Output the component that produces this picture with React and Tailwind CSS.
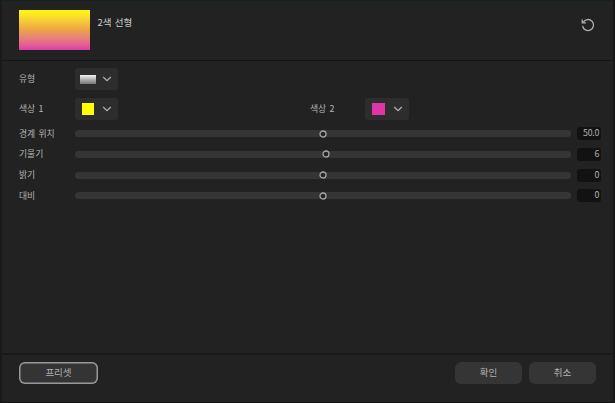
import React from 'react';

const sliders = [
  { label: '경계 위치', value: '50.0', position: 50 },
  { label: '기울기', value: '6', position: 50.7 },
  { label: '밝기', value: '0', position: 50 },
  { label: '대비', value: '0', position: 50 },
];

function Chevron() {
  return (
    <svg className="ml-auto mr-[6px]" width="10" height="6" viewBox="0 0 10 6" fill="none" stroke="#b0b0b0" strokeWidth="1.3">
      <path d="M1.2 1 5 4.7 8.8 1" />
    </svg>
  );
}

function Dropdown({ children, className = 'w-[43px]' }) {
  return (
    <button className={`flex h-[22px] shrink-0 items-center rounded-[3px] bg-[#2d2d2d] ${className}`}>
      {children}
      <Chevron />
    </button>
  );
}

function Label({ children, className = '' }) {
  return <span className={`shrink-0 whitespace-nowrap pb-[0.5px] text-[8.8px] leading-[12px] text-[#b4b4b4] [word-spacing:1.3px] ${className}`}>{children}</span>;
}

function SliderRow({ label, value, position }) {
  return (
    <div className="flex h-[20.67px] items-center">
      <Label className="w-[56px]">{label}</Label>
      <div className="relative h-[7px] w-[496px] rounded-full bg-[#353535]">
        <svg
          className="absolute top-1/2 h-[9px] w-[9px] -translate-x-1/2 -translate-y-1/2"
          style={{ left: `${position}%` }}
          viewBox="0 0 9 9"
        >
          <circle cx="4.5" cy="4.5" r="3" fill="#242424" stroke="#a8a8a8" strokeWidth="1.3" />
        </svg>
      </div>
      <span className="ml-[6px] h-[13px] w-[24px] rounded-[3px] bg-[#121212] pr-[2px] text-right text-[8.8px] leading-[12.5px] tracking-[-0.3px] text-[#b4b4b4]">
        {value}
      </span>
    </div>
  );
}

export default function App() {
  return (
    <div className="flex h-[403px] w-[615px] flex-col overflow-hidden border-x-2 border-b border-t border-x-[#191919] border-b-[#111111] border-t-[#12231e] bg-[#222222] font-['Noto_Sans_CJK_KR',sans-serif]">
      <header className="flex h-[60px] shrink-0 border-b border-[#151515] pl-[17px] pr-[18px] pt-[9px]">
        <div className="h-[40px] w-[71px] bg-linear-to-b from-[#fffb00] via-[#eba344] to-[#df3aa6]" />
        <h1 className="ml-[7.5px] mt-[5px] text-[9.5px] leading-[14px] text-[#cccccc] [word-spacing:1px]">2색 선형</h1>
        <button className="ml-auto mt-[7px] h-[16px] w-[14px]">
          <svg width="14" height="16" viewBox="0 0 14 16" fill="none" stroke="#b0b0b0" strokeWidth="1.3">
            <path d="M2.2 5.4A5.5 5.5 0 1 1 1.6 8.8" />
            <path d="M1.3 2.4v3.5h3.6" />
          </svg>
        </button>
      </header>

      <main className="flex-1 pl-[17px] pt-[7px]">
        <div className="flex h-[22px] items-center">
          <Label className="w-[56px]">유형</Label>
          <Dropdown>
            <span className="ml-[5px] h-[9px] w-[16px] bg-linear-to-b from-[#f1f1f1] to-[#777777]" />
          </Dropdown>
        </div>
        <div className="mb-[3.5px] mt-[8px] flex h-[22px] items-center">
          <Label className="w-[56px]">색상 1</Label>
          <Dropdown>
            <span className="ml-[7px] h-[12px] w-[12px] bg-[#ffff00]" />
          </Dropdown>
          <Label className="ml-[192px] w-[55px]">색상 2</Label>
          <Dropdown className="w-[44px]">
            <span className="ml-[7px] h-[12px] w-[12.5px] bg-[#e035a9]" />
          </Dropdown>
        </div>
        {sliders.map((slider) => (
          <SliderRow key={slider.label} {...slider} />
        ))}
      </main>

      <footer className="flex h-[49px] shrink-0 border-t-2 border-[#1a1a1a] pl-[17px] pr-[17px] pt-[7px] text-[9.5px] text-[#b0b0b0]">
        <button className="h-[22px] w-[79px] rounded-[6px] bg-[#343434] pb-[2px] leading-[20px] shadow-[inset_0_0_0_1.5px_#999999]">프리셋</button>
        <button className="ml-auto h-[22px] w-[67px] rounded-[6px] bg-[#353535] pb-[2px]">확인</button>
        <button className="ml-[7px] h-[22px] w-[67px] rounded-[6px] bg-[#353535] pb-[2px]">취소</button>
      </footer>
    </div>
  );
}
